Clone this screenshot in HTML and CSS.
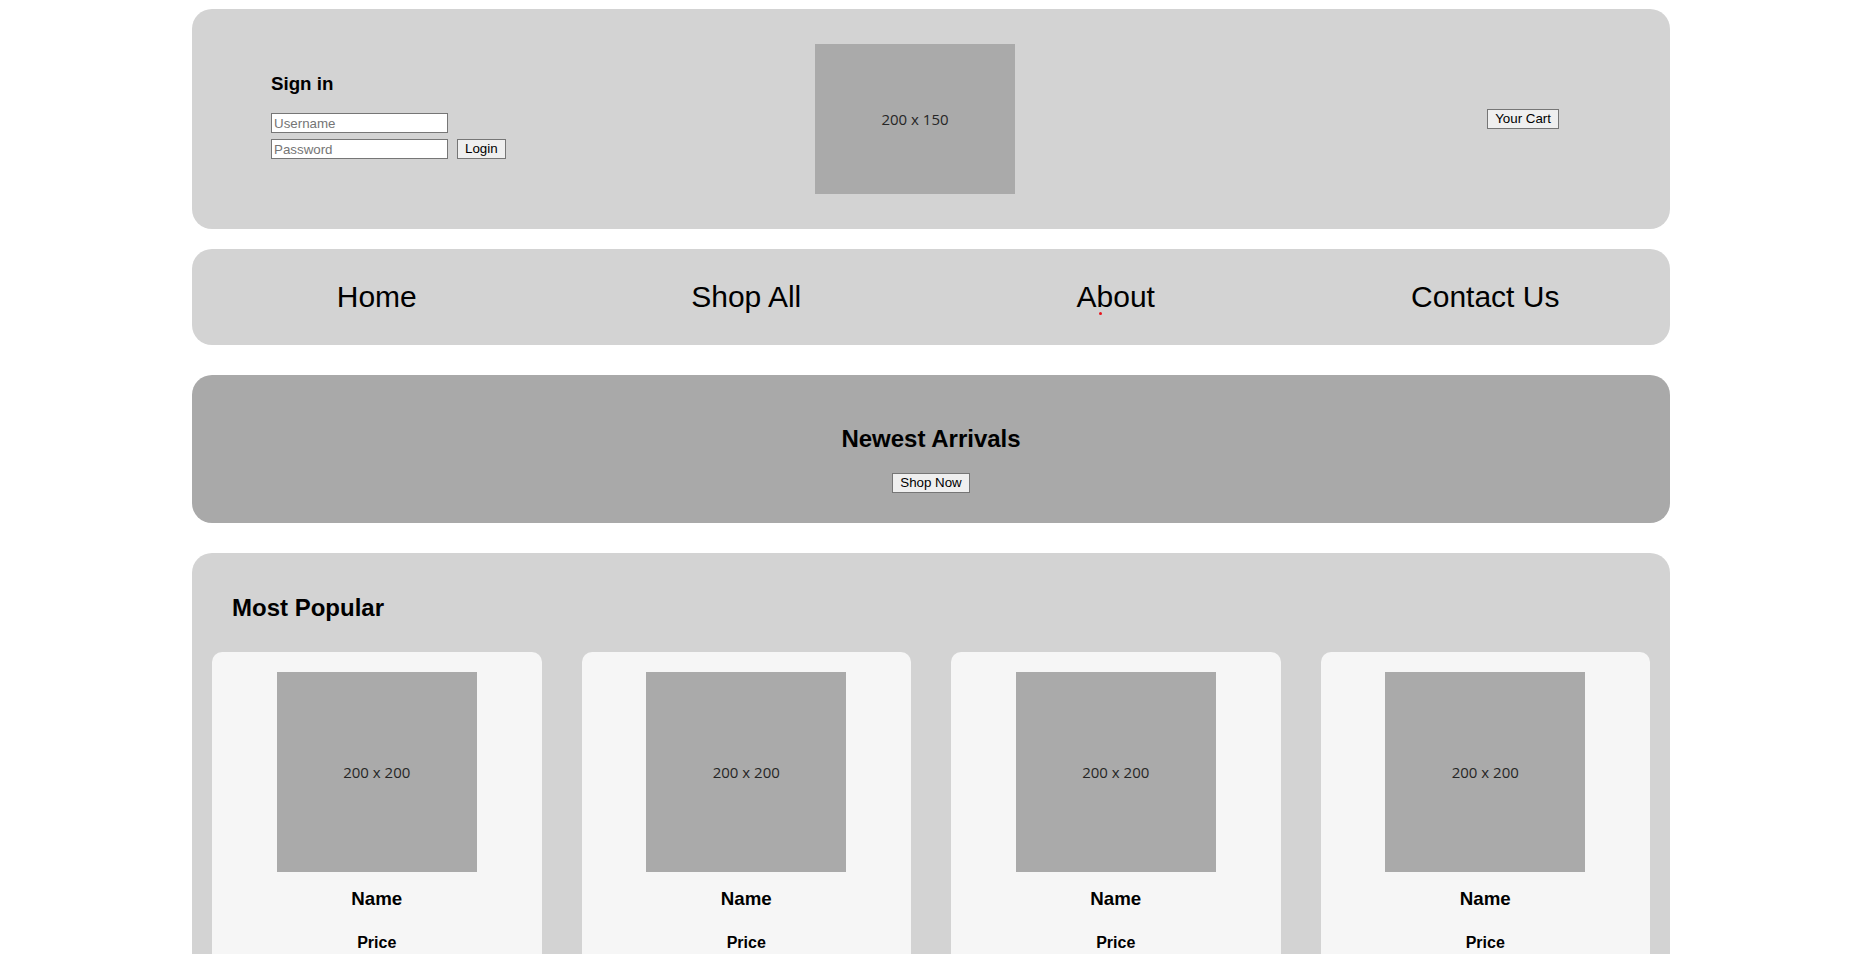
FILE: index.html
```html
<!DOCTYPE html>
<html lang="en">
<head>
  <meta charset="UTF-8">
  <meta name="viewport" content="width=device-width, initial-scale=1.0">
  <title>Shop</title>
  <link rel="stylesheet" href="styles.css">
</head>
<body>

  <div id="pagina">

    <header id="cabecera">
      <div id="signin">
        <h3>Sign in</h3>
        <form>
          <div class="fila">
            <input type="text" placeholder="Username" />
          </div>
          <div class="fila">
            <input type="password" placeholder="Password" />
            <button type="button" id="btn-login">Login</button>
          </div>
        </form>
      </div>
      <div class="placeholder logo">200 x 150</div>
      <button type="button" id="btn-cart">Your Cart</button>
    </header>

    <nav id="menu">
      <a href="#">Home</a>
      <a href="#">Shop All</a>
      <a href="#" class="punto">About</a>
      <a href="#">Contact Us</a>
    </nav>

    <section id="novedades">
      <h2>Newest Arrivals</h2>
      <button type="button">Shop Now</button>
    </section>

    <section id="populares">
      <h2>Most Popular</h2>
      <div id="productos">
        <div class="producto">
          <div class="placeholder foto">200 x 200</div>
          <h3>Name</h3>
          <h4>Price</h4>
        </div>
        <div class="producto">
          <div class="placeholder foto">200 x 200</div>
          <h3>Name</h3>
          <h4>Price</h4>
        </div>
        <div class="producto">
          <div class="placeholder foto">200 x 200</div>
          <h3>Name</h3>
          <h4>Price</h4>
        </div>
        <div class="producto">
          <div class="placeholder foto">200 x 200</div>
          <h3>Name</h3>
          <h4>Price</h4>
        </div>
      </div>
    </section>

  </div>

</body>
</html>
```

FILE: styles.css
```css
body {
  font-family: "Liberation Sans", Arial, sans-serif;
  margin: 8px;
  background-color: white;
  color: black;
}
#pagina {
  width: 1478px;
  margin: 1px auto 0 auto;
}
button {
  font-family: "Liberation Sans", Arial, sans-serif;
  font-size: 13.33px;
  color: black;
  background-color: #efefef;
  border: 1px solid #767676;
  border-radius: 0;
  padding: 1px 7px;
  height: 20px;
  line-height: 16px;
}
input {
  font-family: "Liberation Sans", Arial, sans-serif;
  font-size: 13.33px;
  box-sizing: border-box;
  width: 177px;
  height: 20px;
  padding: 1px 2px;
  border: 1px solid #767676;
  background-color: white;
  margin: 0;
}
input::placeholder {
  color: #757575;
}
.placeholder {
  display: flex;
  justify-content: center;
  align-items: center;
  background-color: #aaaaaa;
  color: #262626;
  font-family: "Open Sans", sans-serif;
  font-size: 15px;
}

/* cabecera */
#cabecera {
  background-color: lightgray;
  border-radius: 20px;
  padding: 35px 111px 35px 79px;
  display: grid;
  grid-template-columns: 464px 200px 1fr;
  column-gap: 80px;
  align-items: center;
}
#signin h3 {
  font-size: 18.72px;
  margin: 18.72px 0;
}
#signin form {
  margin-bottom: 25px;
}
.fila {
  display: flex;
  align-items: center;
}
.fila + .fila {
  margin-top: 6px;
}
#btn-login {
  margin-left: 9px;
}
.logo {
  width: 200px;
  height: 150px;
}
#btn-cart {
  justify-self: end;
}

/* menu */
#menu {
  margin-top: 20px;
  background-color: lightgray;
  border-radius: 20px;
  padding: 30px 0;
  display: flex;
}
#menu a {
  flex: 1;
  text-align: center;
  font-size: 30px;
  line-height: 36px;
  color: black;
  text-decoration: none;
}
.punto {
  position: relative;
}
.punto::after {
  content: "";
  position: absolute;
  left: calc(50% - 17px);
  top: 33px;
  width: 3px;
  height: 3px;
  border-radius: 50%;
  background-color: #e8141c;
}

/* novedades */
#novedades {
  margin-top: 30px;
  background-color: darkgray;
  border-radius: 20px;
  padding: 30px;
  text-align: center;
}
#novedades h2 {
  font-size: 24px;
  margin: 19.92px 0;
}

/* populares */
#populares {
  margin-top: 30px;
  background-color: lightgray;
  border-radius: 20px;
  padding: 20px;
}
#populares h2 {
  font-size: 24px;
  margin: 21px 20px 30px 20px;
}
#productos {
  display: flex;
  gap: 40px;
}
.producto {
  flex: 1;
  background-color: #f6f6f6;
  border-radius: 10px;
  padding: 20px;
  text-align: center;
}
.foto {
  width: 200px;
  height: 200px;
  margin: 0 auto;
}
.producto h3 {
  font-size: 18.72px;
  margin: 16px 0 18.72px 0;
}
.producto h4 {
  font-size: 16px;
  margin: 24px 0 21.28px 0;
}
```
